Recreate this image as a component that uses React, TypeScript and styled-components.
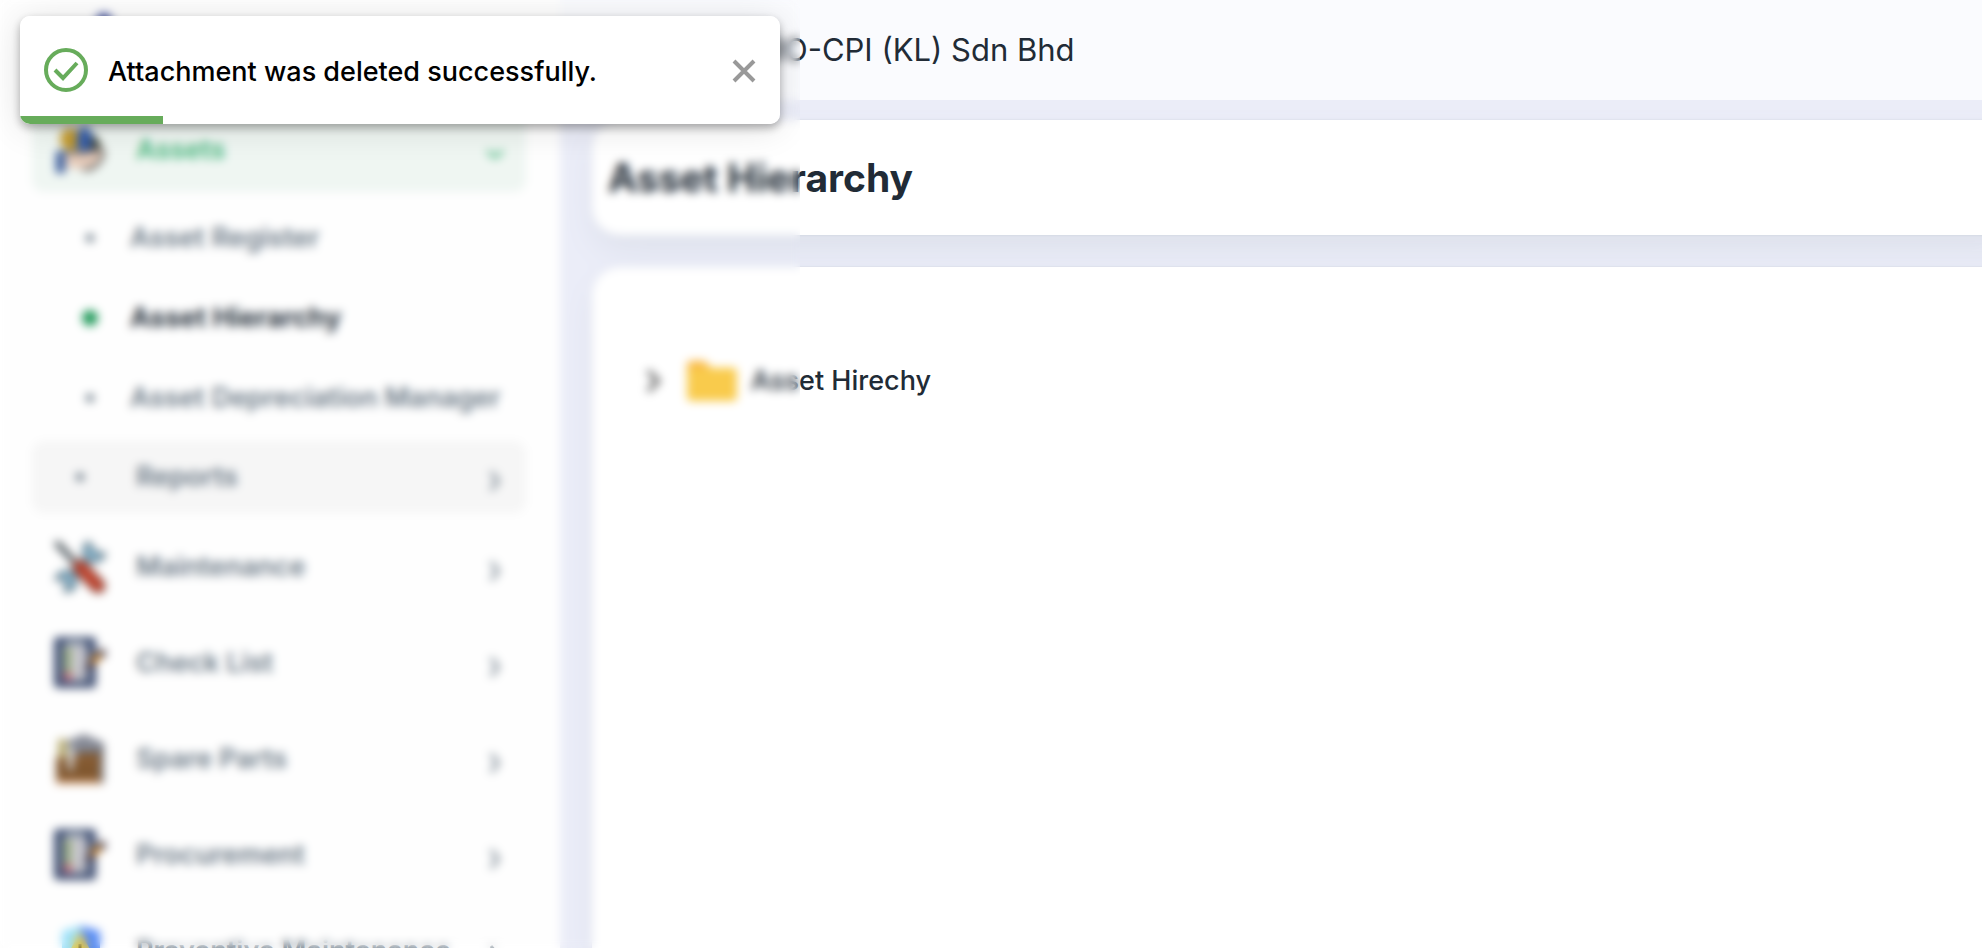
import React from "react";
import styled, { createGlobalStyle } from "styled-components";

const GlobalStyle = createGlobalStyle`
  *, *::before, *::after { box-sizing: border-box; }
  body {
    margin: 0;
    background: #ebedf8;
    color: #212b36;
    font-family: Inter, "Liberation Sans", sans-serif;
    font-size: 27px;
    line-height: 36px;
  }
  button { font: inherit; color: inherit; border: 0; background: none; padding: 0; cursor: pointer; }
  a { color: inherit; text-decoration: none; }
  ul { list-style: none; margin: 0; padding: 0; }
`;

const Shell = styled.div`
  display: flex;
  height: 100vh;
  overflow: hidden;
`;

const Sidebar = styled.nav`
  flex: 0 0 560px;
  padding: 0 34px 0 32px;
  background: #fefefe;
  overflow: hidden;
`;

const Brand = styled.div`
  height: 108px;
  padding: 12px 16px;
`;

const NavList = styled.ul`
  display: flex;
  flex-direction: column;
  gap: 12px;
`;

const NavButton = styled.button<{ $active?: boolean; $compact?: boolean }>`
  display: flex;
  align-items: center;
  width: 100%;
  height: ${(p) => (p.$compact ? 72 : 84)}px;
  padding: 0 20px 0 22px;
  border-radius: 12px;
  text-align: left;
  font-weight: 600;
  color: ${(p) => (p.$active ? "#45b57c" : "#6c7a87")};
  background: ${(p) => (p.$active ? "#eff6f2" : p.$compact ? "#f6f6f6" : "transparent")};
`;

const IconSlot = styled.span`
  display: flex;
  justify-content: center;
  width: 52px;
  margin-right: 30px;
`;

const NavLabel = styled.span`
  flex: 1;
  white-space: nowrap;
`;

const Arrow = styled.svg`
  width: 20px;
  height: 20px;
  margin-top: 8px;
  fill: none;
  stroke: currentColor;
  stroke-width: 3;
`;

const SubList = styled.ul`
  padding: 6px 0 0;
`;

const SubReports = styled.li`
  padding-top: 3px;
`;

const SubLink = styled.a<{ $active?: boolean }>`
  display: flex;
  align-items: center;
  height: 80px;
  padding-left: 48px;
  gap: 30px;
  white-space: nowrap;
  font-weight: ${(p) => (p.$active ? 700 : 600)};
  color: ${(p) => (p.$active ? "#2b3540" : "#6c7a87")};
`;

const DotSlot = styled.span`
  display: flex;
  justify-content: center;
  width: 20px;
`;

const Dot = styled.span<{ $active?: boolean }>`
  width: ${(p) => (p.$active ? 16 : 8)}px;
  height: ${(p) => (p.$active ? 16 : 8)}px;
  border-radius: 50%;
  background: ${(p) => (p.$active ? "#229a5b" : "#637381")};
`;

const Content = styled.div`
  flex: 1;
  min-width: 0;
  display: flex;
  flex-direction: column;
`;

const Header = styled.header`
  display: flex;
  align-items: center;
  height: 100px;
  padding-left: 204px;
  background: #fafbfe;
  font-size: 31px;
  line-height: 40px;
  white-space: nowrap;
`;

const Main = styled.main`
  flex: 1;
  display: flex;
  flex-direction: column;
  gap: 32px;
  padding: 20px 0 0 32px;
  overflow: hidden;
`;

const Card = styled.section`
  margin-right: -48px;
  background: #fff;
  border-radius: 28px;
  box-shadow: 0 0 2px rgba(145, 158, 171, 0.3), 0 16px 32px -4px rgba(145, 158, 171, 0.16);
`;

const TitleCard = styled(Card)`
  display: flex;
  align-items: center;
  height: 115px;
  padding: 0 16px;
`;

const TreeCard = styled(Card)`
  flex: 1;
  padding: 88px 48px;
  border-radius: 28px 28px 0 0;
`;

const Title = styled.h1`
  margin: 0;
  font-size: 39px;
  line-height: 52px;
  font-weight: 700;
`;

const TreeRow = styled.button`
  display: flex;
  align-items: center;
  height: 52px;
  font-weight: 500;
`;

const Expander = styled.svg`
  width: 28px;
  height: 28px;
  margin-right: 19px;
  fill: none;
  stroke: #555;
  stroke-width: 4;
`;

const Folder = styled.svg`
  width: 50px;
  height: 42px;
  margin-right: 14px;
`;

const ToastLayer = styled.div`
  position: fixed;
  inset: 0 auto 0 0;
  width: 800px;
  padding: 16px 20px;
  overflow: hidden;
  backdrop-filter: blur(5px);
`;

const Toast = styled.div`
  position: relative;
  display: flex;
  align-items: center;
  height: 108px;
  padding: 0 24px;
  border-radius: 10px;
  overflow: hidden;
  background: #fff;
  color: #000;
  font-weight: 500;
`;

const ToastShadow = styled.div`
  border-radius: 10px;
  box-shadow: 0 4px 10px rgba(0, 0, 0, 0.3), 0 4px 36px rgba(0, 0, 0, 0.12);
`;

const StatusIcon = styled.svg`
  width: 44px;
  height: 44px;
  margin-right: 20px;
  fill: none;
  stroke: #67ac5b;
  stroke-width: 4;
`;

const Message = styled.span`
  flex: 1;
  padding-top: 4px;
`;

const Close = styled.button`
  display: flex;
  padding-top: 2px;
  svg { width: 24px; height: 24px; stroke: #999; stroke-width: 4; }
`;

const Progress = styled.div`
  position: absolute;
  left: 0;
  bottom: 0;
  width: 143px;
  height: 8px;
  background: #67ac5b;
`;

const pic = { width: 52, height: 52, viewBox: "0 0 52 52", "aria-hidden": true };

const LogoIcon = () => (
  <svg width="72" height="72" viewBox="0 0 72 72" aria-hidden>
    <circle cx="56" cy="9" r="8" fill="#3f4f9c" />
    <path d="M10 64 34 20l24 44z" fill="#2f9e63" />
  </svg>
);

const AssetsIcon = () => (
  <svg {...pic}>
    <circle cx="17" cy="15" r="11" fill="#c39a2d" />
    <path d="M23 26V8l8-7 8 9v16z" fill="#365fae" />
    <path d="M37 10c6 2 10 8 10 16H37z" fill="#444a3c" />
    <path d="M12 29c8-4 13 0 19 1l18-5c1 10-8 20-20 20l-17-2z" fill="#e6cbba" />
    <path d="M10 28h22l16-4M29 46c12 0 21-10 20-20" fill="none" stroke="#4a4a4a" strokeWidth="3" />
    <path d="M2 27h9v22H2z" fill="#385a9b" />
  </svg>
);

const ToolsIcon = () => (
  <svg {...pic}>
    <path d="m11 40 31-29" stroke="#8bb9d2" strokeWidth="8" />
    <path d="M34 1c-5 5-6 12-2 17 6 5 15 3 19-5l-9-1-2-3z" fill="#8bbbd5" stroke="#56707f" strokeWidth="3" />
    <path d="M20 32c-6-4-15-1-18 6l9 1 2 3-2 8c9 1 14-9 9-18z" fill="#8bbbd5" stroke="#56707f" strokeWidth="3" />
    <path d="m2 1 25 27" stroke="#4b555b" strokeWidth="6" />
    <path d="m26 26 18 19" stroke="#6e3a32" strokeWidth="15" strokeLinecap="round" />
    <path d="m26 26 18 19" stroke="#c8452e" strokeWidth="10" strokeLinecap="round" />
  </svg>
);

const ChecklistIcon = () => (
  <svg {...pic}>
    <rect x="0" y="0" width="42" height="51" rx="4" fill="#3f4f73" />
    <path d="M9 8h24v36H9z" fill="#dcdbe1" />
    <path d="M13 3h17v6H13z" fill="#8f9aaa" />
    <path d="M14 12v23" stroke="#5f7f38" strokeWidth="7" strokeDasharray="6 3" />
    <path d="M14 36v7" stroke="#c04b5c" strokeWidth="7" />
    <path d="M22 15h10M22 24h8M22 33h10M22 40h10" stroke="#85868f" strokeWidth="3" />
    <path d="M36 27 47 17" stroke="#c9852b" strokeWidth="7" />
    <path d="m33 31 6-5M46 18l5-4" stroke="#40384b" strokeWidth="8" />
  </svg>
);

const PartsIcon = () => (
  <svg {...pic}>
    <path d="M13 20V8L30 1l18 8v20z" fill="#858995" />
    <path d="M4 6h8l3 18H4z" fill="#b8ac70" />
    <path d="M2 24h18l26-5v32H2z" fill="#8f6238" />
    <path d="M3 33h43M3 42h43M22 21h22" stroke="#65431f" strokeWidth="3" />
    <path d="M13 13h6v24h-5z" fill="#d2d4d8" />
    <path d="M2 49h46" stroke="#c9956a" strokeWidth="4" />
    <path d="M48 10v40" stroke="#555b67" strokeWidth="3" />
  </svg>
);

const PreventiveIcon = () => (
  <svg {...pic}>
    <path d="M8 6 27 1v46C14 42 8 34 8 22z" fill="#9be0fa" />
    <path d="m27 1 19 5v18c0 11-8 19-19 23z" fill="#568bf5" />
    <path d="m26 6 17 31H10z" fill="#efd04a" />
    <path d="M26 19v9m0 3v4" stroke="#574b22" strokeWidth="3" />
  </svg>
);

const ArrowIcon = ({ down = false }: { down?: boolean }) => (
  <Arrow viewBox="0 0 20 20" aria-hidden>
    <path d={down ? "M1 7l8 6 8-6" : "M5 1l7 9-7 9"} />
  </Arrow>
);

const sections = [
  { label: "Maintenance", icon: <ToolsIcon /> },
  { label: "Check List", icon: <ChecklistIcon /> },
  { label: "Spare Parts", icon: <PartsIcon /> },
  { label: "Procurement", icon: <ChecklistIcon /> },
  { label: "Preventive Maintenance", icon: <PreventiveIcon /> },
];

const pages = ["Asset Register", "Asset Hierarchy", "Asset Depreciation Manager"];
const currentPage = "Asset Hierarchy";

export default function App() {
  return (
    <>
      <GlobalStyle />
      <Shell>
        <Sidebar>
          <Brand><LogoIcon /></Brand>
          <NavList>
            <li>
              <NavButton $active aria-expanded="true">
                <IconSlot><AssetsIcon /></IconSlot>
                <NavLabel>Assets</NavLabel>
                <ArrowIcon down />
              </NavButton>
              <SubList>
                {pages.map((page) => (
                  <li key={page}>
                    <SubLink href="#" $active={page === currentPage}>
                      <DotSlot><Dot $active={page === currentPage} /></DotSlot>
                      {page}
                    </SubLink>
                  </li>
                ))}
                <SubReports>
                  <NavButton $compact>
                    <IconSlot><Dot /></IconSlot>
                    <NavLabel>Reports</NavLabel>
                    <ArrowIcon />
                  </NavButton>
                </SubReports>
              </SubList>
            </li>
            {sections.map((s) => (
              <li key={s.label}>
                <NavButton>
                  <IconSlot>{s.icon}</IconSlot>
                  <NavLabel>{s.label}</NavLabel>
                  <ArrowIcon />
                </NavButton>
              </li>
            ))}
          </NavList>
        </Sidebar>
        <Content>
          <Header>RO-CPI (KL) Sdn Bhd</Header>
          <Main>
            <TitleCard><Title>Asset Hierarchy</Title></TitleCard>
            <TreeCard>
              <TreeRow>
                <Expander viewBox="0 0 28 28" aria-hidden><path d="m8 4 10 10L8 24" /></Expander>
                <Folder viewBox="0 0 52 44" aria-hidden>
                  <path d="M4 1h14l6 6v10H0V5q0-4 4-4z" fill="#f9b53f" />
                  <path d="M0 11q0-3 4-3h44q4 0 4 4v27q0 4-4 4H4q-4 0-4-4z" fill="#f9cb4c" />
                </Folder>
                Asset Hirechy
              </TreeRow>
            </TreeCard>
          </Main>
        </Content>
      </Shell>
      <ToastLayer>
        <ToastShadow>
          <Toast role="status">
            <StatusIcon viewBox="0 0 44 44" aria-hidden>
              <circle cx="22" cy="22" r="20" />
              <path d="m11 22 8 8 14-15" />
            </StatusIcon>
            <Message>Attachment was deleted successfully.</Message>
            <Close aria-label="Close">
              <svg viewBox="0 0 24 24" aria-hidden><path d="m2 2 20 20M22 2 2 22" /></svg>
            </Close>
            <Progress />
          </Toast>
        </ToastShadow>
      </ToastLayer>
    </>
  );
}
